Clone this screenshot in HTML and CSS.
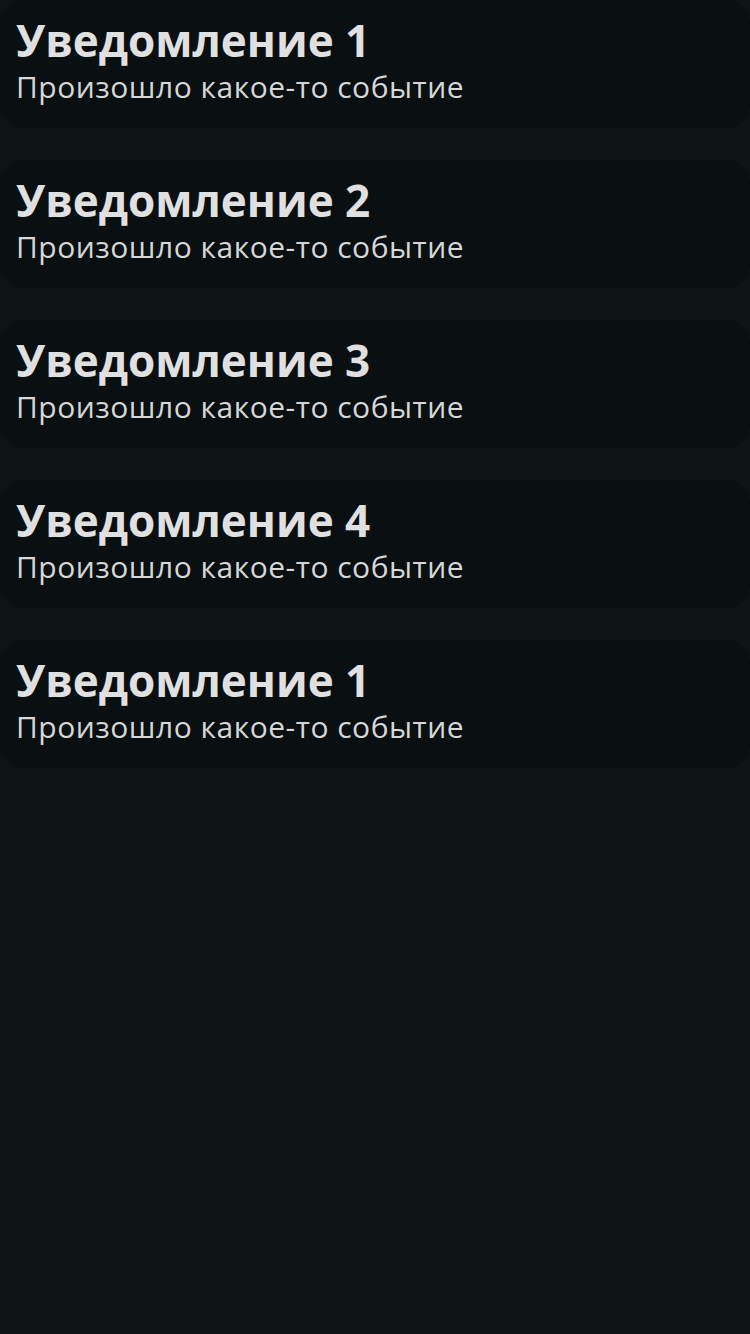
FILE: index.html
```html
<!DOCTYPE html>
<html lang="ru">
<head>
<meta charset="utf-8">
<link rel="stylesheet" href="styles.css">
</head>
<body>
<div class="list">
  <div class="card"><div class="title">Уведомление 1</div><div class="sub">Произошло какое-то событие</div></div>
  <div class="card"><div class="title">Уведомление 2</div><div class="sub">Произошло какое-то событие</div></div>
  <div class="card"><div class="title">Уведомление 3</div><div class="sub">Произошло какое-то событие</div></div>
  <div class="card"><div class="title">Уведомление 4</div><div class="sub">Произошло какое-то событие</div></div>
  <div class="card"><div class="title">Уведомление 1</div><div class="sub">Произошло какое-то событие</div></div>
</div>
</body>
</html>
```
FILE: styles.css
```css
html, body {
  margin: 0;
  padding: 0;
  background: #0e1316;
  height: 100%;
}
body {
  font-family: "Open Sans", "Noto Sans", sans-serif;
}
.list {
  display: flex;
  flex-direction: column;
  gap: 32px;
}
.card {
  height: 128px;
  box-sizing: border-box;
  background: #0a0f12;
  border-radius: 24px;
  padding: 13px 16px 0;
}
.title {
  font-size: 44px;
  font-weight: 700;
  line-height: 54px;
  color: #e0e0e0;
}
.sub {
  font-size: 30px;
  line-height: 40px;
  letter-spacing: 0.5px;
  color: #d6d6d6;
}
```
